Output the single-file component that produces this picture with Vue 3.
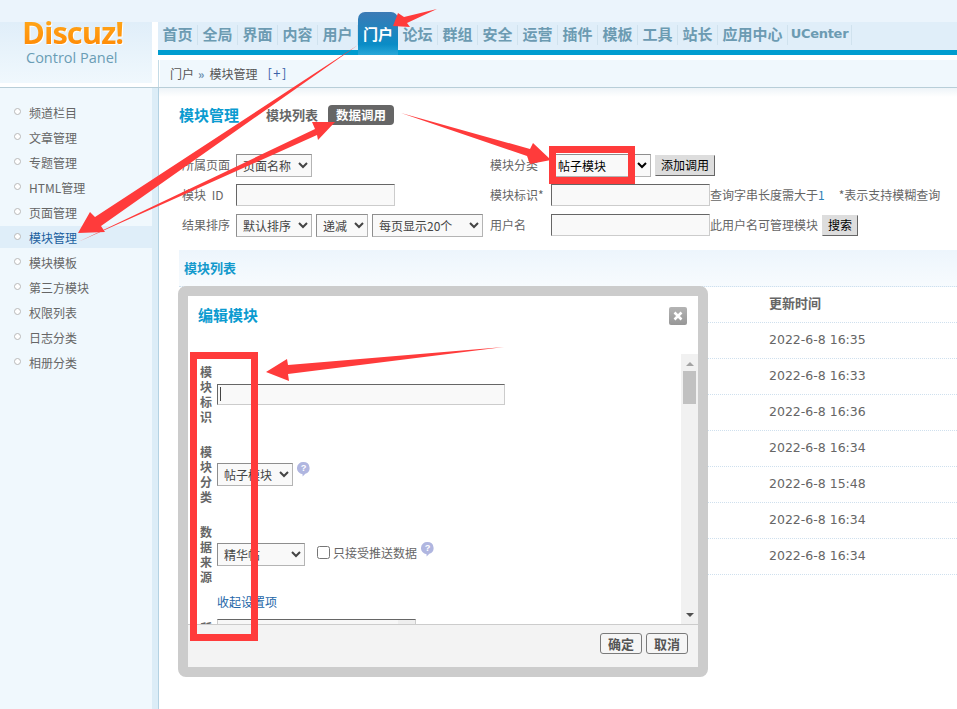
<script setup>
const navItems = ['首页','全局','界面','内容','用户','门户','论坛','群组','安全','运营','插件','模板','工具','站长','应用中心','UCenter']
const sideItems = ['频道栏目','文章管理','专题管理','HTML管理','页面管理','模块管理','模块模板','第三方模块','权限列表','日志分类','相册分类']
const times = ['16:35','16:33','16:36','16:34','15:48','16:34','16:34']
</script>

<template>
  <div class="page">
    <header class="header">
      <div class="logo">
        <div class="logo-word">Discuz!</div>
        <div class="logo-sub">Control Panel</div>
      </div>
      <div class="head-right">
        <nav class="nav">
          <a
            v-for="item in navItems"
            :key="item"
            class="nav-item"
            :class="{ active: item === '门户', latin: item === 'UCenter' }"
          >{{ item }}</a>
        </nav>
        <div class="nav-line"></div>
        <div class="crumb">
          <span>门户</span><span class="crumb-sep">»</span><span>模块管理</span><span class="crumb-add">[+]</span>
        </div>
      </div>
    </header>

    <div class="body">
      <aside class="side">
        <ul class="side-list">
          <li v-for="item in sideItems" :key="item" class="side-item" :class="{ current: item === '模块管理' }">
            <i class="dot"></i>{{ item }}
          </li>
        </ul>
      </aside>

      <main class="main">
        <div class="title-row">
          <h1 class="title">模块管理</h1>
          <span class="tab">模块列表</span>
          <span class="tab on">数据调用</span>
        </div>

        <form class="filter" @submit.prevent>
          <label>所属页面</label>
          <div class="ctl"><select class="w76"><option>页面名称</option></select></div>
          <label>模块分类</label>
          <div class="ctl">
            <select class="w100 dark"><option>帖子模块</option></select>
            <button class="btn" type="button">添加调用</button>
          </div>

          <label class="spaced">模块 ID</label>
          <div class="ctl"><input class="txt" type="text" /></div>
          <label>模块标识*</label>
          <div class="ctl flush">
            <input class="txt" type="text" />
            <span>查询字串长度需大于<span class="num">1</span></span>
            <span class="hint">*表示支持模糊查询</span>
          </div>

          <label>结果排序</label>
          <div class="ctl">
            <select class="w76"><option>默认排序</option></select>
            <select class="w52"><option>递减</option></select>
            <select class="w111"><option>每页显示20个</option></select>
          </div>
          <label>用户名</label>
          <div class="ctl flush">
            <input class="txt" type="text" />
            <span>此用户名可管理模块</span>
            <button class="btn search" type="button">搜索</button>
          </div>
        </form>

        <div class="list-head">模块列表</div>
        <div class="row head-row"><span>更新时间</span></div>
        <div v-for="(t, i) in times" :key="i" class="row date-row"><span>2022-6-8 {{ t }}</span></div>
      </main>
    </div>

    <section class="dialog">
      <div class="dlg-head">
        <h2 class="dlg-title">编辑模块</h2>
        <span class="dlg-close">
          <svg width="18" height="18" viewBox="0 0 18 18"><path d="M5.5 5.5l7 7M12.5 5.5l-7 7" stroke="#fff" stroke-width="2.6" /></svg>
        </span>
      </div>
      <div class="dlg-scroll">
        <div class="dlg-body">
          <div class="f-row">
            <span class="f-label">模块标识</span>
            <input class="txt long" type="text" />
          </div>
          <div class="f-row">
            <span class="f-label">模块分类</span>
            <select class="w76"><option>帖子模块</option></select>
            <svg class="help" width="13" height="15" viewBox="0 0 14 16"><path d="M7 0a6.5 6.5 0 0 1 2 12.7L6 15.5V13A6.5 6.5 0 0 1 7 0z" fill="#b0b6e0" /><text x="7" y="10" class="q">?</text></svg>
          </div>
          <div class="f-row">
            <span class="f-label">数据来源</span>
            <select class="w88"><option>精华帖</option></select>
            <label class="check"><input type="checkbox" />只接受推送数据</label>
            <svg class="help" width="13" height="15" viewBox="0 0 14 16"><path d="M7 0a6.5 6.5 0 0 1 2 12.7L6 15.5V13A6.5 6.5 0 0 1 7 0z" fill="#b0b6e0" /><text x="7" y="10" class="q">?</text></svg>
          </div>
          <a class="collapse">收起设置项</a>
          <div class="f-row top">
            <span class="f-label">所属页面</span>
            <div class="picker"><i></i></div>
          </div>
        </div>
        <div class="scrollbar">
          <i class="arrow up"></i>
          <i class="thumb"></i>
          <i class="arrow down"></i>
        </div>
      </div>
      <div class="dlg-foot">
        <button class="pn" type="button">确定</button>
        <button class="pn" type="button">取消</button>
      </div>
    </section>

    <svg class="marks" width="957" height="709" viewBox="0 0 957 709">
      <g fill="#ff3b3b">
        <polygon points="437,9 404,17 398,13 393,26 410,27 407,23" />
        <polygon points="358,45 95,217 90,212 78,233 105,232 101,226" />
        <polygon points="78,242 315,129 312,122 335,122 318,140 317,135" />
        <polygon points="401,113 530,149 533,143 551,160 530,164 527,156" />
        <polygon points="504,347 288,365 287,359 266,372 289,381 288,374" />
      </g>
      <g fill="none" stroke="#ff3b3b" stroke-width="7">
        <rect x="552.5" y="149.5" width="79" height="31" />
        <rect x="193.5" y="355.5" width="61" height="282" />
      </g>
    </svg>
  </div>
</template>

<style>
html, body { margin: 0; background: #fff; }
</style>

<style scoped>
.page {
  position: relative;
  width: 957px;
  height: 709px;
  overflow: hidden;
  background: #fff;
  color: #666;
  font: 12px/1.3 "Noto Sans CJK SC", "Liberation Sans", sans-serif;
}
ul, h1, h2 { margin: 0; padding: 0; }

/* header */
.header {
  display: flex;
  box-sizing: border-box;
  height: 88px;
  border-bottom: 1px solid #b8ced8;
  background: linear-gradient(#ebf4fc 22px, #fff 22px);
}
.logo {
  width: 152px;
  height: 61px;
  margin-top: 22px;
  background: linear-gradient(#e0eef9, #f0f8fd);
  flex: none;
  margin-right: 6px;
}
.logo-word {
  margin: -7px 0 0 22px;
  width: 110px;
  height: 32px;
  font: 700 31px/34px "Open Sans", sans-serif;
  letter-spacing: -1px;
  background: linear-gradient(#ffab1c, #ff8a06);
  -webkit-background-clip: text;
  background-clip: text;
  color: transparent;
  filter: drop-shadow(1px 1px 0 #fff);
}
.logo-sub {
  margin: 2px 0 0 26px;
  font: 14.5px/18px "Open Sans", sans-serif;
  color: #6a9db5;
}
.head-right {
  flex: 1;
  padding-top: 22px;
  min-width: 0;
}
.nav {
  display: flex;
  height: 28px;
  background: #e0eef9;
}
.nav-item {
  width: 39px;
  height: 20px;
  margin-top: 3px;
  flex: none;
  text-align: center;
  border-right: 1px solid #d0e2ee;
  font-size: 15px;
  font-weight: 700;
  line-height: 17px;
  color: #6c9bb2;
}
.nav-item:nth-child(15) { width: 69px; }
.nav-item.latin {
  width: 63px;
  font: 700 13px/17px "DejaVu Sans", sans-serif;
  letter-spacing: -0.3px;
}
.nav-item.active {
  position: relative;
  z-index: 1;
  width: 40px;
  height: 43px;
  margin-top: -10px;
  border: 0;
  border-radius: 7px 7px 0 0;
  line-height: 43px;
  color: #fff;
  background: linear-gradient(#3c7ab5, #0a8cc6 75%, #2aa8d8);
}
.nav-line { height: 5px; background: #009ccf; }
.crumb {
  display: flex;
  align-items: center;
  height: 27px;
  margin: 5px 0 0 2px;
  padding-left: 10px;
  background: #f0f8fd;
  box-shadow: -1px 0 0 #fff, -2px 0 0 #c4dbe6;
  color: #555;
}
.crumb-sep { margin: 0 5px 0 4px; color: #6b8fae; font-weight: 700; }
.crumb-add { margin-left: 10px; letter-spacing: 1.5px; font-size: 13px; color: #3b62a8; }

/* sidebar */
.body { display: flex; height: 621px; }
.side {
  width: 152px;
  flex: none;
  background: #f0f8fd;
  border-right: 6px solid #dcedf7;
  padding-top: 13px;
  box-sizing: content-box;
  box-shadow: 1px 0 0 #b4d2e2;
}
.side-list { list-style: none; display: flex; flex-direction: column; gap: 3px; }
.side-item {
  box-sizing: border-box;
  display: flex;
  align-items: center;
  height: 22px;
  padding: 2px 0 0 14px;
  color: #666;
}
.side-item.current { background: #dfeef9; color: #1a5f9e; }
.dot {
  width: 5px;
  height: 5px;
  margin-right: 8px;
  margin-top: -4px;
  border: 1px solid #b9b9b9;
  border-radius: 50%;
  background: #fff;
}

/* main */
.main {
  flex: 1;
  min-width: 0;
  margin-left: 1px;
  padding: 17px 0 0 20px;
  background: linear-gradient(#eef4f8, #fff 9px);
}
.title-row { display: flex; align-items: center; height: 20px; }
.title { width: 87px; font-size: 15px; line-height: 20px; color: #0b9bd0; }
.tab { font-size: 13px; font-weight: 700; color: #666; }
.tab.on {
  margin-left: 10px;
  padding: 0 8px;
  height: 20px;
  line-height: 20px;
  border-radius: 4px;
  background: #666;
  color: #fff;
  font-size: 12.5px;
}
.filter {
  display: grid;
  grid-template-columns: 54px 254px 61px 1fr;
  grid-auto-rows: 30px;
  align-items: center;
  margin-top: 25px;
  padding-left: 3px;
  height: 90px;
}
.filter label { color: #666; }
.spaced { word-spacing: 3px; }
.ctl { display: flex; align-items: center; gap: 4px; white-space: nowrap; }
.ctl.flush { gap: 0; }
.num { color: #2f7fb5; }
.hint { margin-left: 14px; }
select, .txt, .btn { box-sizing: border-box; font: inherit; margin: 0; }
select {
  height: 23px;
  padding: 0 0 0 2px;
  border: 1px solid #b4b4b4;
  border-top-color: #8e8e8e;
  border-left-color: #8e8e8e;
  border-radius: 0;
  background-color: #f9f9f9;
  color: #444;
}
select.dark { color: #000; }
.w52 { width: 52px; }
.w76 { width: 76px; }
.w88 { width: 88px; }
.w100 { width: 100px; }
.w111 { width: 111px; }
.txt {
  width: 159px;
  height: 22px;
  padding: 0 3px;
  border: 1px solid #ccc;
  border-top-color: #666;
  border-left-color: #666;
  background: #f9f9f9;
}
.btn {
  height: 21px;
  padding: 0 5px;
  border: 1px solid #ddd;
  border-right-color: #666;
  border-bottom-color: #666;
  background: #ddd;
  color: #000;
}
.btn.search { margin-left: 4px; }
.list-head {
  box-sizing: border-box;
  height: 37px;
  margin-top: 10px;
  padding: 9px 0 0 5px;
  background: linear-gradient(#edf5fc, #f7fbfe);
  border-bottom: 1px dotted #cfe0ee;
  font-size: 13px;
  font-weight: 700;
  color: #1399cc;
  line-height: 18px;
}
.row {
  box-sizing: border-box;
  display: flex;
  align-items: center;
  height: 36px;
  padding: 0 0 2px 590px;
  border-bottom: 1px dotted #cfe0ee;
}
.head-row { font-size: 13px; font-weight: 700; color: #666; }
.date-row { font: 12.5px "DejaVu Sans", sans-serif; color: #666; }

/* dialog */
.dialog {
  position: absolute;
  left: 178px;
  top: 286px;
  z-index: 2;
  box-sizing: border-box;
  width: 530px;
  height: 391px;
  display: flex;
  flex-direction: column;
  border: 10px solid #ccc;
  border-radius: 8px;
  background: #fff;
}
.dlg-head {
  display: flex;
  justify-content: space-between;
  align-items: flex-start;
  height: 58px;
  flex: none;
  padding: 9px 11px 0 10px;
  box-sizing: border-box;
}
.dlg-title { font-size: 15px; line-height: 20px; color: #0b9bd0; }
.dlg-close {
  width: 18px;
  height: 18px;
  margin-top: 2px;
  border-radius: 2px;
  background: linear-gradient(#b4b4b4, #979797);
}
.dlg-close svg { display: block; }
.dlg-scroll { display: flex; height: 270px; flex: none; overflow: hidden; }
.dlg-body {
  flex: 1;
  min-width: 0;
  padding: 10px 0 0 10px;
  display: flex;
  flex-direction: column;
  gap: 20px;
}
.f-row { display: flex; align-items: center; height: 60px; flex: none; }
.f-row.top { align-items: flex-start; margin-top: -11px; }
.f-label {
  flex: none;
  width: 13px;
  margin: 0 4px 0 2px;
  font-weight: 700;
  line-height: 15px;
  color: #666;
  word-break: break-all;
}
.f-row.top .f-label { padding-top: 1px; }
.txt.long {
  width: 288px;
  height: 21px;
  background: #f9f9f9 linear-gradient(#444, #444) no-repeat 2px center / 1px 14px;
}
.help { margin-left: 4px; margin-top: -10px; flex: none; }
.q { fill: #fff; font: 700 10px "Liberation Sans", sans-serif; text-anchor: middle; }
.check { display: flex; align-items: center; gap: 3px; margin-left: 12px; margin-top: -3px; }
.check input { width: 13px; height: 13px; margin: 0; }
.collapse { margin: -10px 0 0 19px; color: #2366a8; line-height: 16px; height: 16px; flex: none; }
.picker {
  position: relative;
  box-sizing: border-box;
  width: 199px;
  height: 40px;
  border: 1px solid #ccc;
  border-top-color: #666;
  background: #f7f7f7;
}
.picker i { position: absolute; right: 0; top: 0; bottom: 0; width: 17px; background: #eee; }
.scrollbar {
  display: flex;
  flex-direction: column;
  align-items: center;
  flex: none;
  width: 17px;
  height: 270px;
  background: #f1f1f1;
}
.thumb { width: 13px; height: 33px; margin-top: 5px; background: #c1c1c1; }
.arrow { width: 0; height: 0; border-left: 4px solid transparent; border-right: 4px solid transparent; }
.arrow.up { margin-top: 8px; border-bottom: 4px solid #a3a3a3; }
.arrow.down { margin-top: auto; margin-bottom: 7px; border-top: 4px solid #505050; }
.dlg-foot {
  flex: 1;
  display: flex;
  justify-content: flex-end;
  align-items: flex-start;
  gap: 4px;
  padding: 8px 10px 0 0;
  background: #f3f3f3;
  border-top: 1px solid #ccc;
}
.pn {
  box-sizing: border-box;
  width: 42px;
  height: 21px;
  padding: 0;
  border: 1px solid #7a7a7a;
  border-radius: 3px;
  background: #f5f5f5;
  color: #555;
  font: 700 13px/19px "Noto Sans CJK SC", sans-serif;
}

/* annotations */
.marks { position: absolute; left: 0; top: 0; z-index: 3; pointer-events: none; }
</style>
